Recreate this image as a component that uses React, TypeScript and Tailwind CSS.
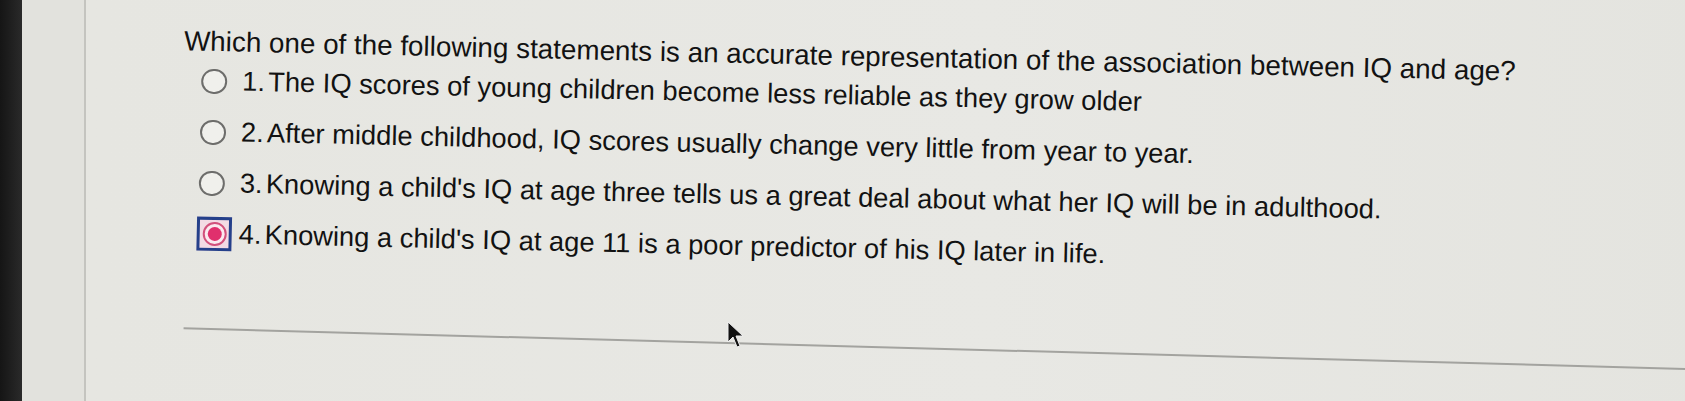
import React from 'react';

const options = [
  { n: '1.', text: 'The IQ scores of young children become less reliable as they grow older', selected: false },
  { n: '2.', text: 'After middle childhood, IQ scores usually change very little from year to year.', selected: false },
  { n: '3.', text: "Knowing a child's IQ at age three tells us a great deal about what her IQ will be in adulthood.", selected: false },
  { n: '4.', text: "Knowing a child's IQ at age 11 is a poor predictor of his IQ later in life.", selected: true },
];

const Radio: React.FC<{ selected: boolean }> = ({ selected }) =>
  selected ? (
    <div className="flex h-[34px] w-[35px] shrink-0 items-center justify-center border-[3px] border-[#24408a] bg-[#f3dbe4]">
      <div className="flex h-[24px] w-[24px] items-center justify-center rounded-full border-2 border-[#d2517c] bg-[#fbe9ef]">
        <div className="h-[14px] w-[14px] rounded-full bg-[#e0306d]" />
      </div>
    </div>
  ) : (
    <div className="flex h-[34px] w-[35px] shrink-0 items-center justify-start">
      <div className="ml-[1px] h-[25px] w-[26px] rounded-full border-2 border-[#6d6d6b] bg-[#f0f0ec]" />
    </div>
  );

export default function App() {
  return (
    <div className="relative flex h-[401px] w-full overflow-hidden bg-[#e5e5e0]" style={{ fontFamily: '"Liberation Sans", Arial, sans-serif' }}>
      <div className="w-[22px] shrink-0 bg-gradient-to-r from-[#151515] to-[#2a2a2a]" />
      <div className="w-[64px] shrink-0 border-r-2 border-[#c4c4bf] bg-[#e2e2dd]" />
      <div className="flex-1 bg-gradient-to-r from-[#e6e6e1] via-[#e8e8e4] to-[#e3e3de]">
        <div className="origin-top-left rotate-[1.3deg] pl-[99px] pt-[22px]">
          <p className="whitespace-nowrap text-[27.8px] leading-[34px] text-[#121212]">
            Which one of the following statements is an accurate representation of the association between IQ and age?
          </p>
          <div className="mt-[5px] flex flex-col gap-[17px] pl-[17px]">
            {options.map((o) => (
              <div key={o.n} className="flex items-center whitespace-nowrap text-[27.3px] leading-[34px] text-[#121212]">
                <Radio selected={o.selected} />
                <span className="ml-[7px] w-[26px]">{o.n}</span>
                <span>{o.text}</span>
              </div>
            ))}
          </div>
          <div className="ml-[6px] mt-[77px] h-[2px] w-[1700px] origin-left rotate-[0.25deg] bg-[#a3a39f]" />
        </div>
      </div>
      <svg className="absolute left-[727px] top-[321px]" width="18" height="28" viewBox="0 0 18 28">
        <path d="M1 1 L1 21 L6 16 L10 26 L13 25 L9 15 L16 15 Z" fill="#111" stroke="#eee" strokeWidth="1" />
      </svg>
    </div>
  );
}
